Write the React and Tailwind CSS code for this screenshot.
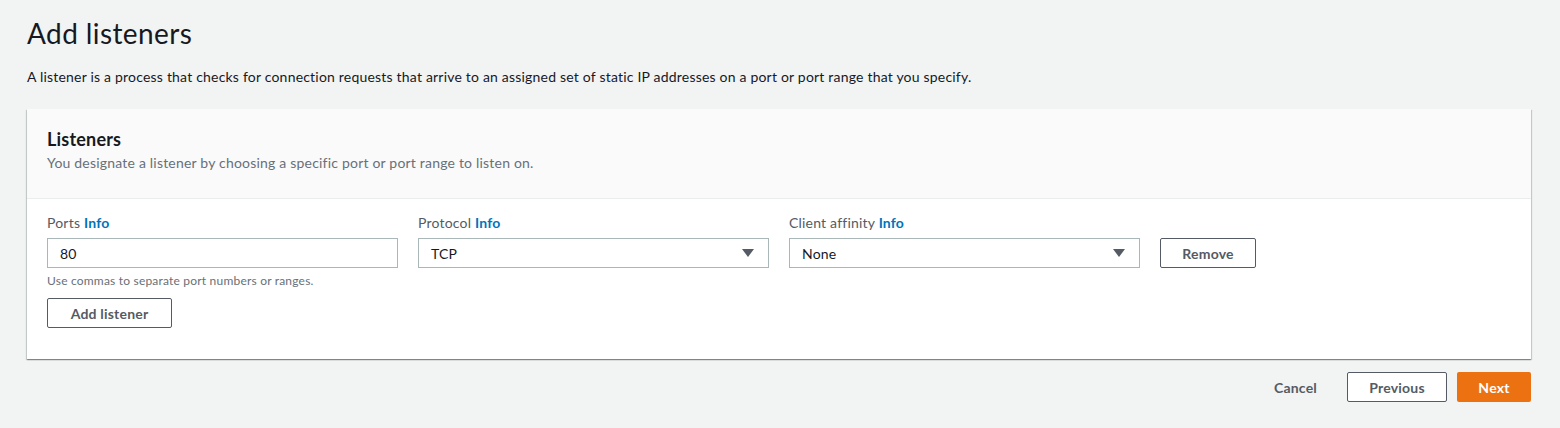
import { useState } from "react";

function Info() {
    return <span className="font-bold text-[#0073bb] cursor-pointer">Info</span>;
}

function Field({ label, children, hint }) {
    return (
        <div className="w-[351px]">
            <div className="text-[14px] leading-[22px] text-[#545b64]">
                {label} <Info />
            </div>
            <div className="mt-[4px]">{children}</div>
            {hint && (
                <div className="mt-[5px] text-[12px] leading-[16px] text-[#687078]">{hint}</div>
            )}
        </div>
    );
}

function Select({ value }) {
    return (
        <div className="flex h-[30px] items-center justify-between border border-[#aab7b8] bg-white pl-[12px] pr-[14px] text-[14px] text-[#16191f]">
            <span>{value}</span>
            <svg width="12" height="8" viewBox="0 0 12 8">
                <path d="M0 0h12L6 8z" fill="#545b64" />
            </svg>
        </div>
    );
}

export default function App() {
    const [ports, setPorts] = useState("80");

    return (
        <div
            className="min-h-[428px] bg-[#f2f3f3] px-[27px] pt-[15px] tracking-[0.2px] text-[#16191f]"
            style={{ fontFamily: "Lato, 'Liberation Sans', sans-serif" }}
        >
            <h1 className="text-[28px] leading-[36px] font-normal tracking-[0.4px]">Add listeners</h1>
            <p className="mt-[15px] text-[14px] leading-[22px]">
                A listener is a process that checks for connection requests that arrive to an assigned
                set of static IP addresses on a port or port range that you specify.
            </p>

            <div className="mt-[21px] w-[1504px] bg-white shadow-[0_1px_1px_0_rgba(0,28,36,0.3),1px_1px_1px_0_rgba(0,28,36,0.15),-1px_1px_1px_0_rgba(0,28,36,0.15)]">
                <div className="border-b border-[#eaeded] bg-[#fafafa] px-[20px] pt-[18px] pb-[24px]">
                    <h2 className="text-[18px] leading-[24px] font-bold">Listeners</h2>
                    <p className="mt-[1px] text-[14px] leading-[22px] text-[#687078]">
                        You designate a listener by choosing a specific port or port range to listen on.
                    </p>
                </div>

                <div className="px-[20px] pt-[13px] pb-[31px]">
                    <div className="flex items-start gap-[20px]">
                        <Field label="Ports" hint="Use commas to separate port numbers or ranges.">
                            <input
                                value={ports}
                                onChange={(e) => setPorts(e.target.value)}
                                className="block h-[30px] w-full border border-[#aab7b8] bg-white px-[12px] text-[14px] text-[#16191f] outline-none"
                            />
                        </Field>
                        <Field label="Protocol">
                            <Select value="TCP" />
                        </Field>
                        <Field label="Client affinity">
                            <Select value="None" />
                        </Field>
                        <button className="mt-[26px] h-[30px] w-[96px] rounded-[2px] border border-[#545b64] bg-white text-[14px] font-bold text-[#545b64]">
                            Remove
                        </button>
                    </div>
                    <button className="mt-[9px] h-[30px] w-[125px] rounded-[2px] border border-[#545b64] bg-white text-[14px] font-bold text-[#545b64]">
                        Add listener
                    </button>
                </div>
            </div>

            <div className="mt-[13px] flex w-[1504px] items-center justify-end gap-[10px]">
                <button className="h-[30px] px-[20px] text-[14px] font-bold text-[#545b64]">Cancel</button>
                <button className="h-[30px] w-[100px] rounded-[2px] border border-[#545b64] bg-white text-[14px] font-bold text-[#545b64]">
                    Previous
                </button>
                <button className="h-[30px] w-[74px] rounded-[2px] bg-[#ec7211] text-[14px] font-bold text-white">
                    Next
                </button>
            </div>
        </div>
    );
}
